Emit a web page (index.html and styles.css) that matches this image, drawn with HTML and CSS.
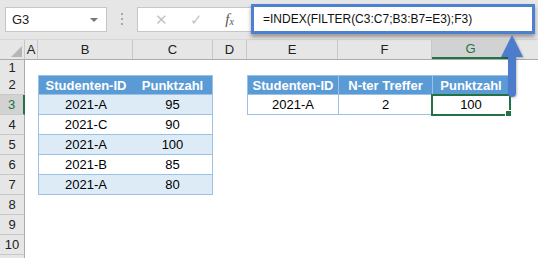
FILE: index.html
```html
<!DOCTYPE html>
<html lang="de">
<head>
  <meta charset="UTF-8" />
  <title>INDEX FILTER</title>
  <link rel="stylesheet" href="styles.css">
</head>
<body>
  <div class="toolbar">
    <div class="namebox"><span>G3</span><span class="caret"></span></div>
    <div class="dots"><i></i><i></i><i></i></div>
    <div class="btns">
      <span class="btn">✕</span>
      <span class="btn">✓</span>
      <span class="btn fx">f<sub>x</sub></span>
    </div>
    <div class="formula">=INDEX(FILTER(C3:C7;B3:B7=E3);F3)</div>
  </div>

  <div class="sheet">
    <div class="row colhead">
      <div class="corner"></div><div>A</div><div>B</div><div>C</div><div>D</div><div>E</div><div>F</div><div class="sel">G</div><div></div>
    </div>
    <div class="row short">
      <div class="rh">1</div><div></div><div></div><div></div><div></div><div></div><div></div><div></div><div></div>
    </div>
    <div class="row">
      <div class="rh">2</div><div></div>
      <div class="t1 th first">Studenten-ID</div><div class="t1 th last">Punktzahl</div>
      <div></div>
      <div class="t2 th">Studenten-ID</div><div class="t2 th">N-ter Treffer</div><div class="t2 th">Punktzahl</div>
      <div></div>
    </div>
    <div class="row">
      <div class="rh sel">3</div><div></div>
      <div class="t1 band first">2021-A</div><div class="t1 band last">95</div>
      <div></div>
      <div class="t2">2021-A</div><div class="t2">2</div><div class="t2 active">100</div>
      <div></div>
    </div>
    <div class="row">
      <div class="rh">4</div><div></div>
      <div class="t1 first">2021-C</div><div class="t1 last">90</div>
      <div></div><div></div><div></div><div></div><div></div>
    </div>
    <div class="row">
      <div class="rh">5</div><div></div>
      <div class="t1 band first">2021-A</div><div class="t1 band last">100</div>
      <div></div><div></div><div></div><div></div><div></div>
    </div>
    <div class="row">
      <div class="rh">6</div><div></div>
      <div class="t1 first">2021-B</div><div class="t1 last">85</div>
      <div></div><div></div><div></div><div></div><div></div>
    </div>
    <div class="row">
      <div class="rh">7</div><div></div>
      <div class="t1 band first">2021-A</div><div class="t1 band last">80</div>
      <div></div><div></div><div></div><div></div><div></div>
    </div>
    <div class="row">
      <div class="rh">8</div><div></div><div></div><div></div><div></div><div></div><div></div><div></div><div></div>
    </div>
    <div class="row">
      <div class="rh">9</div><div></div><div></div><div></div><div></div><div></div><div></div><div></div><div></div>
    </div>
    <div class="row">
      <div class="rh">10</div><div></div><div></div><div></div><div></div><div></div><div></div><div></div><div></div>
    </div>
    <div class="row">
      <div class="rh"></div><div></div><div></div><div></div><div></div><div></div><div></div><div></div><div></div>
    </div>
  </div>

  <svg class="arrow" width="30" height="66" viewBox="0 0 30 66">
    <path d="M14 1 L25 23 L18 23 L18 59 Q18 63 14 63 Q10 63 10 59 L10 23 L3 23 Z" fill="#4d7ccc" />
  </svg>
</body>
</html>
```

FILE: styles.css
```css
* { box-sizing: border-box; }
body { margin: 0; width: 538px; height: 258px; overflow: hidden; background: #fff; font-family: "Liberation Sans", Arial, sans-serif; color: #000; position: relative; }

.toolbar { height: 40px; background: #e6e6e6; border-bottom: 1px solid #d6d6d6; display: flex; align-items: flex-start; padding-left: 5px; }
.namebox { margin-top: 7px; width: 102px; height: 25px; background: #fff; border: 1px solid #c6c6c6; display: flex; align-items: center; justify-content: space-between; padding: 0 8px 0 6px; font-size: 13px; color: #222; }
.caret { width: 0; height: 0; border-left: 4px solid transparent; border-right: 4px solid transparent; border-top: 4px solid #777; }
.dots { width: 30px; margin-top: 13px; display: flex; flex-direction: column; align-items: center; gap: 3px; }
.dots i { width: 2px; height: 2px; background: #a8a8a8; }
.btns { margin-top: 7px; width: 114px; height: 25px; background: #fff; border: 1px solid #c6c6c6; border-right: none; display: flex; align-items: center; justify-content: space-around; padding: 0 6px; }
.btn { color: #c4c4c4; font-size: 15px; }
.fx { color: #555; font-family: "Liberation Serif", serif; font-style: italic; font-size: 15px; }
.fx sub { font-size: 10px; vertical-align: -1px; }
.formula { margin-top: 4px; width: 284px; height: 30px; background: #fff; border: 3px solid #4f7fcf; box-shadow: 0 3px 4px rgba(0,0,0,0.35); font-size: 12px; padding: 5px 0 0 9px; color: #111; }

.sheet { font-size: 13px; }
.row { display: grid; grid-template-columns: 25px 13px 95px 80px 34px 91px 94px 78px 1fr; height: 20px; }
.row.short { height: 15px; }
.row > div { display: flex; align-items: center; justify-content: center; }

.colhead { background: #e6e6e6; border-bottom: 1px solid #ababab; }
.colhead > div { border-right: 1px solid #c8c8c8; color: #222; }
.colhead > div:last-child { border-right: none; }
.colhead .sel { background: #d2d2d2; color: #217346; border-bottom: 2px solid #217346; }
.corner { position: relative; }
.corner::after { content: ""; position: absolute; right: 2px; bottom: 2px; border-left: 11px solid transparent; border-bottom: 11px solid #b5b5b5; }

.rh { background: #e6e6e6; border-right: 1px solid #ababab; border-bottom: 1px solid #c8c8c8; color: #222; }
.rh.sel { background: #d2d2d2; color: #217346; border-right: 2px solid #217346; }

.t1, .t2 { border-bottom: 1px solid #9bc2e6; }
.th { background: #5b9bd5; color: #fff; font-weight: bold; border-top: 1px solid #9bc2e6; }
.band { background: #ddebf7; }
.t1.first { border-left: 1px solid #9bc2e6; }
.t1.last { border-right: 1px solid #9bc2e6; }
.t2 { border-left: 1px solid #9bc2e6; }
.t2:nth-child(8) { border-right: 1px solid #9bc2e6; }

.active { position: relative; outline: 2px solid #217346; outline-offset: -1px; }
.active::after { content: ""; position: absolute; right: -3px; bottom: -3px; width: 5px; height: 5px; background: #217346; border: 1px solid #fff; }

.arrow { position: absolute; left: 498px; top: 34px; filter: drop-shadow(1px 1px 1px rgba(0,0,0,0.25)); }
```
